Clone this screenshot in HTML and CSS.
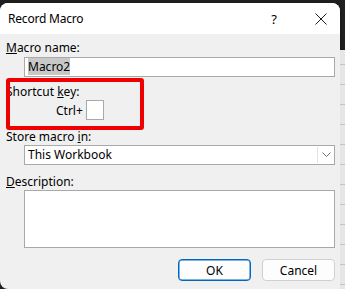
FILE: index.html
```html
<!DOCTYPE html>
<html lang="en">
<head>
  <meta charset="UTF-8">
  <title>Record Macro</title>
  <link rel="stylesheet" href="styles.css">
</head>
<body>
  <div class="screen">
    <div class="dialog">
      <div class="titlebar">
        <span class="title">Record Macro</span>
        <span class="help">?</span>
        <svg class="close" width="12" height="12" viewBox="0 0 12 12">
          <path d="M0.5 0.5 L11.5 11.5 M11.5 0.5 L0.5 11.5" stroke="#1a1a1a" stroke-width="1"/>
        </svg>
      </div>
      <div class="body">
        <div class="label"><u>M</u>acro name:</div>
        <div class="field"><span class="selected">Macro2</span></div>

        <div class="label shortcut-label">Shortcut <u>k</u>ey:</div>
        <div class="shortcut-row">
          <span class="ctrl">Ctrl+</span>
          <div class="keybox"></div>
        </div>

        <div class="label store-label">Store macro <u>i</u>n:</div>
        <div class="field select">
          <span class="value">This Workbook</span>
          <span class="arrow">
            <svg width="9" height="6" viewBox="0 0 9 6"><path d="M0.5 0.5 L4.5 4.5 L8.5 0.5" fill="none" stroke="#707070" stroke-width="1"/></svg>
          </span>
        </div>

        <div class="label desc-label"><u>D</u>escription:</div>
        <div class="field textarea"></div>

        <div class="buttons">
          <button class="btn primary">OK</button>
          <button class="btn">Cancel</button>
        </div>

        <!-- annotation drawn over the dialog -->
        <div class="highlight"></div>
      </div>
    </div>
    <div class="sheet"></div>
  </div>
</body>
</html>
```

FILE: styles.css
```css
* { margin: 0; padding: 0; box-sizing: border-box; }
body {
  background-color: #1f1f1f;
  font-family: 'Noto Sans', 'Open Sans', sans-serif;
  font-size: 12px;
  color: #000;
  width: 345px;
  height: 289px;
  overflow: hidden;
}
.screen {
  display: flex;
  height: 289px;
}
.dialog {
  width: 340px;
  margin-top: 3px;
  background-color: #f0f0f0;
  border-radius: 8px 8px 0 8px;
  overflow: hidden;
  box-shadow: 1px 0 2px rgba(0, 0, 0, 0.25);
}
.titlebar {
  height: 31px;
  background-color: #fff;
  display: flex;
  align-items: center;
  padding-left: 8px;
}
.title { font-size: 12px; flex: 1; letter-spacing: -0.2px; }
.help { font-size: 13px; margin-right: 38px; }
.close { margin-right: 13px; }

.body {
  position: relative;
  padding: 6px 5px 0 6px;
}
.label { line-height: 16px; height: 16px; }
.field {
  margin: 1px 0 0 18px;
  height: 20px;
  background-color: #fff;
  border: 1px solid #a9a9a9;
  padding: 1px 3px;
  line-height: 16px;
}
.selected { background-color: #c8c8c8; }
.shortcut-label { margin-top: 7px; }
.shortcut-row {
  display: flex;
  align-items: center;
  padding-left: 50px;
}
.ctrl { margin-right: 3px; }
.keybox {
  width: 18px;
  height: 20px;
  background-color: #fff;
  border: 1px solid #a9a9a9;
}
.store-label { margin-top: 9px; }
.select {
  display: flex;
  margin-top: 0;
  padding-right: 0;
}
.select .value { flex: 1; }
.select .arrow {
  width: 17px;
  border-left: 1px solid #e3e3e3;
  display: flex;
  align-items: center;
  justify-content: center;
}
.desc-label { margin-top: 9px; }
.textarea { height: 58px; margin-top: 0; }
.buttons {
  display: flex;
  justify-content: flex-end;
  gap: 11px;
  margin-top: 11px;
}
.btn {
  width: 73px;
  height: 22px;
  font-family: inherit;
  font-size: 12px;
  background-color: #fdfdfd;
  border: 1px solid #d0d0d0;
  border-radius: 4px;
}
.btn.primary {
  border-color: #0067c0;
  box-shadow: inset 0 0 0 0.5px #0067c0;
}
.highlight {
  position: absolute;
  left: 6px;
  top: 44px;
  width: 138px;
  height: 52px;
  border: 4px solid #ee0000;
  border-radius: 3px;
}
.sheet {
  flex: 1;
  margin-top: 50px;
  background-color: #e6e6e6;
  background-image: repeating-linear-gradient(to bottom, transparent 0, transparent 14px, #c4c4c4 14px, #c4c4c4 15px, transparent 15px, transparent 20px);
}
```
